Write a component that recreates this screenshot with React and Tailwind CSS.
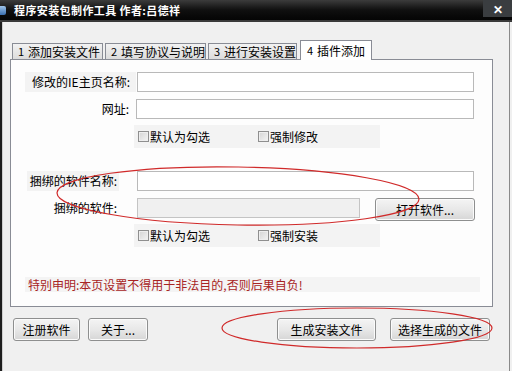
import React from 'react'

const font = "font-['Noto_Sans_CJK_SC',sans-serif]"

function Btn({ children, className = '' }) {
  return (
    <div
      className={`flex h-[23px] items-center justify-center rounded-[3px] border border-[#8e8f8f] bg-linear-to-b from-[#f4f4f4] via-[#e8e8e8] to-[#d6d6d6] text-[12px] leading-none text-black shadow-[inset_0_0_0_1px_#fbfbfb] ${className}`}
    >
      {children}
    </div>
  )
}

function Check({ label }) {
  return (
    <div className="flex items-center">
      <div className="h-[11px] w-[11px] border border-[#8f8f8f] bg-linear-to-br from-[#d4d4d4] to-[#f4f4f4] shadow-[inset_0_0_0_1px_#eeeeee]" />
      <span className="ml-[1px] text-[12px] leading-none text-black">{label}</span>
    </div>
  )
}

function CheckRow({ a, b }) {
  return (
    <div className="ml-[123px] flex h-[23px] w-[246px] items-center bg-[#f3f3f3] pl-[4px]">
      <div className="w-[120px]">
        <Check label={a} />
      </div>
      <Check label={b} />
    </div>
  )
}

function Tab({ num, children, active }) {
  if (active) {
    return (
      <div className="relative z-10 -mb-px ml-px flex h-[20px] w-[72px] items-center whitespace-nowrap border border-b-0 border-[#898c95] bg-white pl-[6px] text-[12px] leading-none text-black">
        <span className="mr-[4px] text-[11px]">{num}</span>
        {children}
      </div>
    )
  }
  return (
    <div className="mr-[2px] flex h-[16px] items-center overflow-hidden whitespace-nowrap border border-b-0 border-[#898c95] bg-linear-to-b from-[#f2f2f2] to-[#dcdcdc] pl-[5px] text-[12px] leading-none text-black">
      <span className="mr-[4px] text-[11px]">{num}</span>
      {children}
    </div>
  )
}

export default function App() {
  return (
    <div className={`relative flex h-[371px] w-[512px] flex-col overflow-hidden bg-[#f0f0f0] ${font}`}>
      {/* title bar */}
      <div className="flex h-[20px] shrink-0 items-center bg-linear-to-b from-[#3c3c3c] via-[#101010] to-[#050505]">
        <div className="h-[9px] w-[6px] rounded-r-[2px] bg-linear-to-b from-[#9fc4e8] to-[#3a6fb0]" />
        <span className="ml-[8px] text-[11px] font-bold leading-none tracking-[0.4px] text-white">
          程序安装包制作工具 作者:吕德祥
        </span>
        <div className="ml-auto flex h-[17px] w-[29px] items-center justify-center self-start bg-[#3a3d40]">
          <span className="text-[12px] font-bold leading-none text-white">✕</span>
        </div>
      </div>
      <div className="h-[2px] shrink-0 bg-[#3a3a3a]" />

      <div className="flex flex-1">
        <div className="w-[2px] bg-[#1e1e1e]" />
        <div className="w-px bg-[#cfcfcf]" />

        <div className="flex flex-1 flex-col pl-[7px]">
          {/* tabs */}
          <div className="mt-[18px] flex h-[19px] items-end pl-[2px]">
            <div className="w-[93px]">
              <Tab num="1">添加安装文件</Tab>
            </div>
            <div className="w-[103px]">
              <Tab num="2">填写协议与说明</Tab>
            </div>
            <div className="w-[91px]">
              <Tab num="3">进行安装设置</Tab>
            </div>
            <Tab num="4" active>插件添加</Tab>
          </div>

          {/* panel */}
          <div className="flex h-[248px] w-[483px] flex-col border border-[#898c95] bg-[#fdfdfd] pt-[12px]">
            <div className="flex h-[20px] items-center">
              <div className="ml-[14px] flex h-[20px] w-[111px] items-center justify-end bg-[#f3f3f3] pr-[6px] text-[12px] leading-none text-black">
                修改的IE主页名称:
              </div>
              <div className="ml-[1px] h-[20px] w-[337px] border border-[#b9b9b9] bg-white" />
            </div>
            <div className="mt-[7px] flex h-[20px] items-center">
              <div className="ml-[14px] flex h-[20px] w-[110px] items-center justify-end pr-[6px] text-[12px] leading-none text-black">
                网址:
              </div>
              <div className="ml-[1px] h-[20px] w-[338px] border border-[#b9b9b9] bg-white" />
            </div>
            <div className="mt-[6px]">
              <CheckRow a="默认为勾选" b="强制修改" />
            </div>

            <div className="mt-[23px] flex h-[20px] items-center">
              <div className="ml-[16px] flex h-[20px] w-[92px] items-center justify-end bg-[#f3f3f3] pr-[2px] text-[12px] leading-none text-black">
                捆绑的软件名称:
              </div>
              <div className="ml-[18px] h-[20px] w-[337px] border border-[#b9b9b9] bg-white" />
            </div>
            <div className="mt-[7px] flex h-[24px] items-start">
              <div className="ml-[16px] flex h-[20px] w-[92px] items-center justify-end pr-[2px] text-[12px] leading-none text-black">
                捆绑的软件:
              </div>
              <div className="ml-[18px] h-[20px] w-[223px] border border-[#c4c4c4] bg-[#f0f0f0]" />
              <Btn className="ml-[15px] w-[100px]">打开软件...</Btn>
            </div>
            <div className="mt-[2px]">
              <CheckRow a="默认为勾选" b="强制安装" />
            </div>

            <div className="mt-[30px] ml-[14px] flex h-[15px] w-[455px] items-center bg-[#f4f4f4] pl-[3px] text-[12px] leading-none text-[#a82424]">
              特别申明:本页设置不得用于非法目的,否则后果自负!
            </div>
          </div>

          {/* bottom buttons */}
          <div className="mt-[11px] flex items-center">
            <Btn className="ml-[3px] w-[67px]">注册软件</Btn>
            <Btn className="ml-[8px] w-[60px]">关于...</Btn>
            <Btn className="ml-[129px] w-[99px]">生成安装文件</Btn>
            <Btn className="ml-[14px] w-[100px]">选择生成的文件</Btn>
          </div>
        </div>
        <div className="w-px bg-[#8a8a8a]" />
        <div className="w-[2px] bg-[#f0f0f0]" />
      </div>

      {/* red hand-drawn marks */}
      <svg className="pointer-events-none absolute left-0 top-0" width="512" height="371" viewBox="0 0 512 371">
        <ellipse cx="238" cy="196" rx="181" ry="29" transform="rotate(1 238 196)" fill="none" stroke="#d02a2a" strokeWidth="1.2" />
        <ellipse cx="357" cy="328" rx="135" ry="20" fill="none" stroke="#d02a2a" strokeWidth="1.2" />
      </svg>
    </div>
  )
}
